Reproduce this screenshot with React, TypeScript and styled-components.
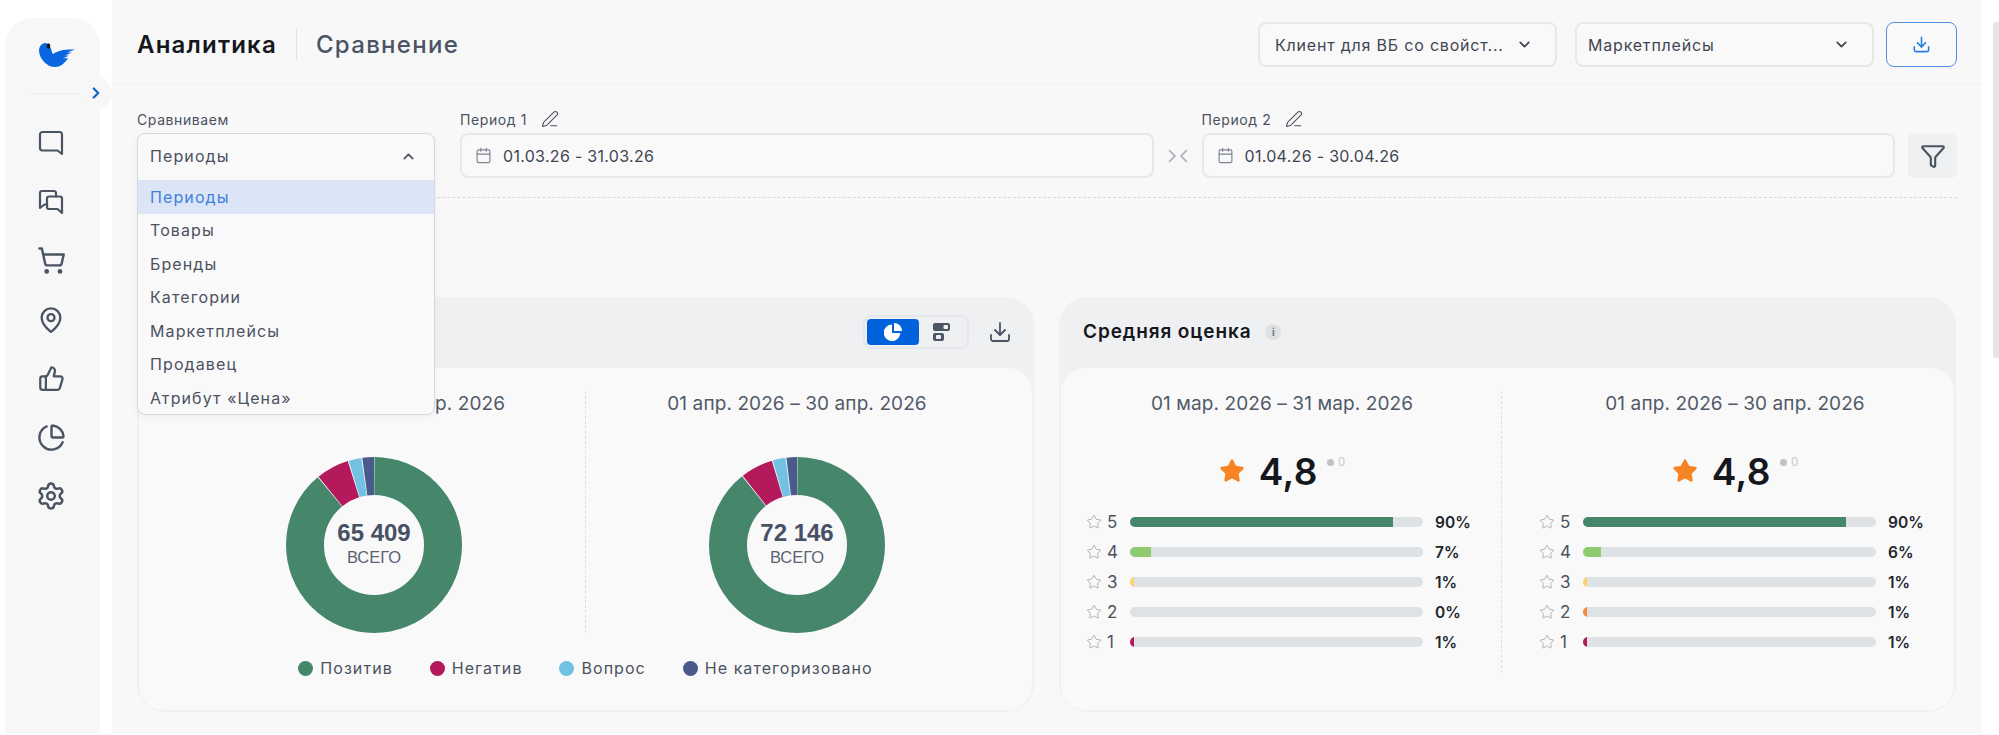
import React from "react";
import styled, { createGlobalStyle } from "styled-components";
import {
  Calendar,
  ChartPie,
  ChevronDown,
  ChevronRight,
  ChevronUp,
  Download,
  Funnel,
  MapPin,
  PenLine,
  Settings,
  ShoppingCart,
  Star,
  ThumbsUp,
} from "lucide-react";

const GlobalStyle = createGlobalStyle`
  html, body {
    margin: 0;
    padding: 0;
    background: #ffffff;
    font-family: Inter, "Noto Sans", sans-serif;
    color: #4b5260;
  }
  * { box-sizing: border-box; }
`;

interface ISegment {
  value: number;
  color: string;
}

const GREEN = "#46866b";
const MAGENTA = "#b3195b";
const SKY = "#72c1e3";
const NAVY = "#4a5a8a";

const options = ["Периоды", "Товары", "Бренды", "Категории", "Маркетплейсы", "Продавец", "Атрибут «Цена»"];

const legend = [
  { label: "Позитив", color: GREEN },
  { label: "Негатив", color: MAGENTA },
  { label: "Вопрос", color: SKY },
  { label: "Не категоризовано", color: NAVY },
];

const ratingsFirst = [
  { star: 5, pct: 90, fill: 89.6, color: GREEN },
  { star: 4, pct: 7, fill: 7, color: "#8ecb70" },
  { star: 3, pct: 1, fill: 1.2, color: "#fbd36b" },
  { star: 2, pct: 0, fill: 0, color: "#f78a3a" },
  { star: 1, pct: 1, fill: 1.2, color: MAGENTA },
];

const ratingsSecond = [
  { star: 5, pct: 90, fill: 89.6, color: GREEN },
  { star: 4, pct: 6, fill: 6, color: "#8ecb70" },
  { star: 3, pct: 1, fill: 1.2, color: "#fbd36b" },
  { star: 2, pct: 1, fill: 1.2, color: "#f78a3a" },
  { star: 1, pct: 1, fill: 1.2, color: MAGENTA },
];

const BirdLogo = () => (
  <svg width="36" height="24" viewBox="0 0 36 24">
    <path
      fill="#0a66e0"
      d="M6 0C2 .5 0 4 0 8c.5 8 8 16 16 16 6 0 11-5 13-9l-5 .5 6-3h-4l7-3h-5l8-3c-8-.5-17 .5-22 4.500-2-2-1-5-3-7C10 2 8 0 6 0Z"
    />
    <ellipse cx="9.500" cy="3" rx="1.800" ry="2.800" fill="#15171c" />
  </svg>
);

const BubbleIcon = () => (
  <svg width="26" height="26" viewBox="0 0 26 26" fill="none" stroke="currentColor" strokeWidth="2.2" strokeLinejoin="round">
    <path d="M4.500 2h17A2.500 2.500 0 0 1 24 4.500V24l-4.500-3.500h-15A2.500 2.500 0 0 1 2 18V4.500A2.500 2.500 0 0 1 4.500 2Z" />
  </svg>
);

const BubblesIcon = () => (
  <svg width="26" height="26" viewBox="0 0 26 26" fill="none" stroke="currentColor" strokeWidth="2.2" strokeLinejoin="round" strokeLinecap="round">
    <path d="M18 7.500V4a2 2 0 0 0-2-2H4a2 2 0 0 0-2 2v15l4.500-3.500H9" />
    <path d="M11 7.500h11a2 2 0 0 1 2 2V24l-4.500-4H11a2 2 0 0 1-2-2V9.500a2 2 0 0 1 2-2Z" />
  </svg>
);

const SwapIcon = () => (
  <svg width="20" height="14" viewBox="0 0 20 14" fill="none" stroke="#a7abb1" strokeWidth="1.600" strokeLinecap="round" strokeLinejoin="round">
    <path d="M1.500 1.500 7 7l-5.500 5.500" />
    <path d="M18.500 1.500 13 7l5.500 5.500" />
  </svg>
);

const PieFillIcon = () => (
  <svg width="18" height="18" viewBox="0 0 18 18" fill="#ffffff">
    <path d="M8 1.500v8.500h8.300A8.300 8.300 0 1 1 8 1.500Z" />
    <path d="M10 0a8 8 0 0 1 8 8h-8V0Z" />
  </svg>
);

const BarsIcon = () => (
  <svg width="17" height="18" viewBox="0 0 17 18">
    <rect x="0" y="0" width="17" height="8" rx="2" fill="#4b5563" />
    <rect x="10.500" y="2" width="4.500" height="4" rx="1" fill="#eff0f2" />
    <rect x="0" y="10" width="11" height="8" rx="2" fill="#4b5563" />
    <rect x="3" y="12" width="5" height="4" rx="1" fill="#eff0f2" />
  </svg>
);

const Donut: React.FC<{ segments: ISegment[]; total: string }> = ({ segments, total }) => {
  const radius = 69;
  const length = 2 * Math.PI * radius;
  let passed = 0;

  return (
    <DonutBox>
      <svg width="176" height="176" viewBox="0 0 176 176">
        <g transform="rotate(-90 88 88)" fill="none" strokeWidth="38">
          {segments.map((s) => {
            const size = (s.value / 100) * length;
            const circle = (
              <circle
                key={s.color}
                cx="88"
                cy="88"
                r={radius}
                stroke={s.color}
                strokeDasharray={`${size - 0.8} ${length - size + 0.8}`}
                strokeDashoffset={-passed - 0.4}
              />
            );
            passed += size;
            return circle;
          })}
        </g>
      </svg>
      <DonutCenter>
        <DonutTotal>{total}</DonutTotal>
        <DonutCaption>ВСЕГО</DonutCaption>
      </DonutCenter>
    </DonutBox>
  );
};

const RatingRows: React.FC<{ rows: typeof ratingsFirst }> = ({ rows }) => (
  <Rows>
    {rows.map((row) => (
      <Row key={row.star}>
        <RowLabel>
          <Star size={16} strokeWidth={1.4} color="#a9acb0" />
          <span>{row.star}</span>
        </RowLabel>
        <Track>
          <TrackFill $color={row.color} style={{ width: `${row.fill}%` }} />
        </Track>
        <RowValue>{row.pct}%</RowValue>
      </Row>
    ))}
  </Rows>
);

const RatingHead = () => (
  <RatingLine>
    <Star size={26} fill="#f78424" color="#f78424" strokeWidth={1.5} />
    <RatingNumber>4,8</RatingNumber>
    <RatingDelta>
      <DeltaDot />
      <span>0</span>
    </RatingDelta>
  </RatingLine>
);

const App = () => {
  return (
    <Page>
      <GlobalStyle />
      <Sidebar>
        <LogoWrap>
          <BirdLogo />
        </LogoWrap>
        <SideDivider>
          <CollapseBump>
            <ChevronRight size={18} strokeWidth={3} color="#1664c8" />
          </CollapseBump>
        </SideDivider>
        <SideNav>
          <NavItem><BubbleIcon /></NavItem>
          <NavItem><BubblesIcon /></NavItem>
          <NavItem><ShoppingCart size={29} strokeWidth={2} /></NavItem>
          <NavItem><MapPin size={28} strokeWidth={2} /></NavItem>
          <NavItem><ThumbsUp size={27} strokeWidth={2} /></NavItem>
          <NavItem><ChartPie size={29} strokeWidth={2} /></NavItem>
          <NavItem><Settings size={30} strokeWidth={2} /></NavItem>
        </SideNav>
      </Sidebar>

      <Main>
        <Header>
          <Titles>
            <PageTitle>Аналитика</PageTitle>
            <TitleDivider />
            <PageSubtitle>Сравнение</PageSubtitle>
          </Titles>
          <HeaderControls>
            <HeaderSelect $pad={15}>
              <span>Клиент для ВБ со свойст...</span>
              <ChevronDown size={17} strokeWidth={2.4} />
            </HeaderSelect>
            <HeaderSelect $pad={11}>
              <span>Маркетплейсы</span>
              <ChevronDown size={17} strokeWidth={2.4} />
            </HeaderSelect>
            <ExportButton>
              <Download size={19} strokeWidth={2} />
            </ExportButton>
          </HeaderControls>
        </Header>

        <Content>
          <Filters>
            <CompareField>
              <FieldLabel>Сравниваем</FieldLabel>
              <CompareAnchor>
                <CompareMenu>
                  <CompareHead>
                    <span>Периоды</span>
                    <ChevronUp size={17} strokeWidth={2.4} />
                  </CompareHead>
                  {options.map((option, i) => (
                    <CompareOption key={option} $active={i === 0}>
                      {option}
                    </CompareOption>
                  ))}
                </CompareMenu>
              </CompareAnchor>
            </CompareField>
            <PeriodField>
              <FieldLabel>
                Период 1
                <PenLine size={18} strokeWidth={1.5} />
              </FieldLabel>
              <DateInput>
                <Calendar size={17} strokeWidth={1.6} color="#7c8490" />
                01.03.26 - 31.03.26
              </DateInput>
            </PeriodField>
            <SwapBox>
              <SwapIcon />
            </SwapBox>
            <PeriodField>
              <FieldLabel>
                Период 2
                <PenLine size={18} strokeWidth={1.5} />
              </FieldLabel>
              <DateInput>
                <Calendar size={17} strokeWidth={1.6} color="#7c8490" />
                01.04.26 - 30.04.26
              </DateInput>
            </PeriodField>
            <FilterButton>
              <Funnel size={26} strokeWidth={2} />
            </FilterButton>
          </Filters>
          <DashedLine />

          <Cards>
            <Card>
              <CardHead>
                <CardTools>
                  <ViewToggle>
                    <ViewButton $active>
                      <PieFillIcon />
                    </ViewButton>
                    <ViewButton>
                      <BarsIcon />
                    </ViewButton>
                  </ViewToggle>
                  <Download size={24} strokeWidth={1.8} />
                </CardTools>
              </CardHead>
              <CardBody>
                <Columns>
                  <DonutColumn $side="left">
                    <PeriodCaption>01 мар. 2026 – 31 мар. 2026</PeriodCaption>
                    <Donut
                      total="65 409"
                      segments={[
                        { value: 88.9, color: GREEN },
                        { value: 6.2, color: MAGENTA },
                        { value: 2.5, color: SKY },
                        { value: 2.4, color: NAVY },
                      ]}
                    />
                  </DonutColumn>
                  <DonutColumn $side="right">
                    <PeriodCaption>01 апр. 2026 – 30 апр. 2026</PeriodCaption>
                    <Donut
                      total="72 146"
                      segments={[
                        { value: 89.2, color: GREEN },
                        { value: 6.1, color: MAGENTA },
                        { value: 2.5, color: SKY },
                        { value: 2.2, color: NAVY },
                      ]}
                    />
                  </DonutColumn>
                </Columns>
                <Legend>
                  {legend.map((item) => (
                    <LegendItem key={item.label}>
                      <LegendDot $color={item.color} />
                      {item.label}
                    </LegendItem>
                  ))}
                </Legend>
              </CardBody>
            </Card>

            <Card>
              <CardHead>
                <CardTitle>Средняя оценка</CardTitle>
                <InfoBadge>i</InfoBadge>
              </CardHead>
              <CardBody>
                <RatingColumns>
                  <RatingColumn $divided>
                    <PeriodCaption>01 мар. 2026 – 31 мар. 2026</PeriodCaption>
                    <RatingHead />
                    <RatingRows rows={ratingsFirst} />
                  </RatingColumn>
                  <RatingColumn $shift>
                    <PeriodCaption>01 апр. 2026 – 30 апр. 2026</PeriodCaption>
                    <RatingHead />
                    <RatingRows rows={ratingsSecond} />
                  </RatingColumn>
                </RatingColumns>
              </CardBody>
            </Card>
          </Cards>
        </Content>
      </Main>

      <ScrollTrack>
        <ScrollThumb />
      </ScrollTrack>
    </Page>
  );
};

export default App;

const Page = styled.div`
  display: flex;
  width: 1999px;
  height: 735px;
  padding-left: 5px;
  overflow: hidden;
  background: #ffffff;
`;

const Sidebar = styled.aside`
  flex: none;
  width: 95px;
  height: 715px;
  margin-top: 18px;
  margin-right: 12px;
  background: #f7f7f8;
  border-radius: 28px 28px 0 0;
  color: #4a5463;
`;

const LogoWrap = styled.div`
  display: flex;
  justify-content: center;
  padding: 25px 0 0 8px;
`;

const SideDivider = styled.div`
  position: relative;
  height: 1px;
  margin: 26px 0 0 23px;
  width: 58px;
  background: #eceef0;
`;

const CollapseBump = styled.div`
  position: absolute;
  left: 52px;
  top: -16px;
  width: 32px;
  height: 32px;
  display: flex;
  align-items: center;
  justify-content: center;
  border-radius: 50%;
  background: #f7f7f8;
`;

const SideNav = styled.nav`
  display: flex;
  flex-direction: column;
  margin-top: 20px;
`;

const NavItem = styled.div`
  display: flex;
  align-items: center;
  justify-content: center;
  height: 58.8px;
  padding-right: 3px;
`;

const Main = styled.main`
  flex: none;
  width: 1870px;
  height: 733px;
  background: #f8f8f9;
`;

const Header = styled.header`
  display: flex;
  align-items: center;
  justify-content: space-between;
  height: 85px;
  padding: 5px 25px 0;
  border-bottom: 1px solid #eef0f1;
`;

const Titles = styled.div`
  display: flex;
  align-items: center;
`;

const PageTitle = styled.h1`
  margin: 0;
  font-size: 24px;
  font-weight: 600;
  letter-spacing: 1.2px;
  color: #15171c;
`;

const TitleDivider = styled.span`
  width: 1px;
  height: 31px;
  margin: 0 19px;
  background: #dfe1e4;
`;

const PageSubtitle = styled.h2`
  margin: 0;
  font-size: 24px;
  font-weight: 500;
  letter-spacing: 1.3px;
  color: #4a5464;
`;

const HeaderControls = styled.div`
  display: flex;
  align-items: center;
`;

const HeaderSelect = styled.div<{ $pad: number }>`
  display: flex;
  align-items: center;
  justify-content: space-between;
  width: 299px;
  height: 45px;
  margin-right: 18px;
  padding: 0 22px 0 ${(p) => p.$pad}px;
  font-size: 16px;
  color: #3f4650;
  letter-spacing: 0.8px;
  background: #f9f9fa;
  border: 2px solid #e6e8ea;
  border-radius: 8px;

  &:nth-child(2) {
    margin-right: 12px;
  }
`;

const ExportButton = styled.button`
  display: flex;
  align-items: center;
  justify-content: center;
  width: 71px;
  height: 45px;
  padding: 0;
  color: #2b7de0;
  background: #f9f9fa;
  border: 1.5px solid #4f90e2;
  border-radius: 8px;
`;

const Content = styled.div`
  padding: 25px 25px 0;
`;

const Filters = styled.div`
  display: flex;
  align-items: flex-end;
`;

const CompareField = styled.div`
  flex: none;
  width: 298px;
  margin-right: 25px;
`;

const FieldLabel = styled.div`
  display: flex;
  align-items: center;
  gap: 14px;
  height: 18px;
  margin-bottom: 5px;
  font-size: 14px;
  letter-spacing: 0.6px;
  color: #4b5260;
`;

const CompareAnchor = styled.div`
  position: relative;
  height: 45px;
`;

const CompareMenu = styled.div`
  position: absolute;
  top: 0;
  left: 0;
  right: 0;
  z-index: 5;
  height: 282px;
  overflow: hidden;
  background: #f9f9fa;
  border: 1.5px solid #d5d8db;
  border-radius: 8px;
  box-shadow: 0 2px 6px rgba(60, 70, 80, 0.06);
`;

const CompareHead = styled.div`
  display: flex;
  align-items: center;
  justify-content: space-between;
  height: 44px;
  margin-bottom: 2px;
  padding: 0 17px 0 12px;
  font-size: 16px;
  letter-spacing: 1.1px;
  color: #4b5260;
`;

const CompareOption = styled.div<{ $active?: boolean }>`
  display: flex;
  align-items: center;
  height: 33.5px;
  padding-left: 12px;
  font-size: 16px;
  letter-spacing: 1.1px;
  color: ${(p) => (p.$active ? "#3f7fe0" : "#4b5260")};
  background: ${(p) => (p.$active ? "#dbe5f5" : "transparent")};
`;

const PeriodField = styled.div`
  flex: 1;
`;

const DateInput = styled.div`
  display: flex;
  align-items: center;
  gap: 11px;
  height: 45px;
  padding-left: 13px;
  font-size: 16px;
  letter-spacing: 0.3px;
  color: #3f4650;
  background: #f9f9fa;
  border: 2px solid #e6e8ea;
  border-radius: 8px;
`;

const SwapBox = styled.div`
  display: flex;
  align-items: center;
  justify-content: center;
  flex: none;
  width: 48px;
  height: 45px;
`;

const FilterButton = styled.button`
  display: flex;
  align-items: center;
  justify-content: center;
  flex: none;
  width: 49px;
  height: 45px;
  margin-left: 13px;
  padding: 0;
  color: #4a5463;
  background: #eff0f2;
  border: 0;
  border-radius: 6px;
`;

const DashedLine = styled.div`
  margin-top: 19px;
  border-top: 1px dashed #d6d9dc;
`;

const Cards = styled.div`
  display: grid;
  grid-template-columns: 897px 897px;
  gap: 25px;
  margin-top: 99px;
`;

const Card = styled.section`
  display: flex;
  flex-direction: column;
  height: 415px;
  padding: 0 2px 2px;
  background: #eff0f2;
  border-radius: 28px;
`;

const CardHead = styled.div`
  display: flex;
  align-items: center;
  flex: none;
  height: 71px;
  padding: 0 22px 2px;
  color: #4a5463;
`;

const CardTitle = styled.h3`
  margin: 0;
  font-size: 19px;
  font-weight: 600;
  letter-spacing: 0.9px;
  color: #15171c;
`;

const InfoBadge = styled.span`
  display: flex;
  align-items: center;
  justify-content: center;
  width: 16px;
  height: 16px;
  margin-left: 14px;
  font-size: 10px;
  font-weight: 700;
  color: #6c727b;
  background: #dfe1e3;
  border-radius: 50%;
`;

const CardTools = styled.div`
  display: flex;
  align-items: center;
  gap: 19px;
  margin: 0 -2px 0 auto;
`;

const ViewToggle = styled.div`
  display: flex;
  width: 106px;
  height: 34px;
  padding: 2px;
  background: #eff0f2;
  border: 2px solid #e5e7ea;
  border-radius: 8px;
`;

const ViewButton = styled.div<{ $active?: boolean }>`
  display: flex;
  align-items: center;
  justify-content: center;
  width: ${(p) => (p.$active ? "52px" : "44px")};
  background: ${(p) => (p.$active ? "#0063dc" : "transparent")};
  border-radius: 4px;
`;

const CardBody = styled.div`
  flex: 1;
  padding-top: 23px;
  background: #f9f9fa;
  border-radius: 24px;
`;

const Columns = styled.div`
  display: flex;
  height: 242px;
`;

const DonutColumn = styled.div<{ $side: "left" | "right" }>`
  display: flex;
  flex-direction: column;
  align-items: center;
  width: ${(p) => (p.$side === "left" ? "447px" : "446px")};
  padding: ${(p) => (p.$side === "left" ? "0 0 0 24px" : "0 24px 0 0")};
  border-right: ${(p) => (p.$side === "left" ? "1px dashed #dcdee1" : "0")};
`;

const PeriodCaption = styled.div`
  flex: none;
  height: 22px;
  padding-top: 2px;
  line-height: 22px;
  font-size: 19px;
  letter-spacing: 0.1px;
  white-space: nowrap;
  color: #515967;
`;

const DonutBox = styled.div`
  position: relative;
  width: 176px;
  height: 176px;
  margin-top: 44px;

  svg {
    display: block;
  }
`;

const DonutCenter = styled.div`
  position: absolute;
  inset: 0;
  display: flex;
  flex-direction: column;
  align-items: center;
  padding-top: 62px;
  font-family: "Liberation Sans", Arial, sans-serif;
`;

const DonutTotal = styled.div`
  font-size: 24px;
  line-height: 28px;
  font-weight: 700;
  color: #475064;
`;

const DonutCaption = styled.div`
  margin-top: 1px;
  font-size: 16.500px;
  line-height: 19px;
  color: #5b6373;
`;

const Legend = styled.div`
  display: flex;
  justify-content: center;
  gap: 37px;
  margin-top: 25px;
`;

const LegendItem = styled.div`
  display: flex;
  align-items: center;
  gap: 7px;
  height: 20px;
  font-size: 16px;
  letter-spacing: 1.05px;
  color: #4b5260;
`;

const LegendDot = styled.span<{ $color: string }>`
  width: 15px;
  height: 15px;
  border-radius: 50%;
  background: ${(p) => p.$color};
`;

const RatingColumns = styled.div`
  display: flex;
  height: 282px;
`;

const RatingColumn = styled.div<{ $divided?: boolean; $shift?: boolean }>`
  display: flex;
  flex-direction: column;
  align-items: center;
  width: ${(p) => (p.$divided ? "441px" : "452px")};
  padding-left: ${(p) => (p.$shift ? "14px" : "2px")};
  border-right: ${(p) => (p.$divided ? "1px dashed #dcdee1" : "0")};
`;

const RatingLine = styled.div`
  display: flex;
  align-items: center;
  height: 50px;
  margin-top: 33px;
`;

const RatingNumber = styled.span`
  margin-left: 14px;
  font-size: 37px;
  font-weight: 600;
  letter-spacing: 0.5px;
  color: #15171c;
`;

const RatingDelta = styled.span`
  display: flex;
  align-items: center;
  gap: 4px;
  margin: -18px 0 0 9px;
  font-size: 11.500px;
  color: #c8cacc;
`;

const DeltaDot = styled.i`
  width: 7px;
  height: 7px;
  border-radius: 50%;
  background: #c0c2c5;
`;

const Rows = styled.div`
  display: flex;
  flex-direction: column;
  margin-top: 11px;
`;

const Row = styled.div`
  display: flex;
  align-items: center;
  width: 392px;
  height: 30px;
`;

const RowLabel = styled.div`
  display: flex;
  align-items: center;
  gap: 5px;
  flex: none;
  width: 44px;
  font-size: 17px;
  color: #4b5260;
`;

const Track = styled.div`
  flex: none;
  width: 293px;
  height: 10px;
  overflow: hidden;
  background: #dfe2e4;
  border-radius: 5px;
`;

const TrackFill = styled.div<{ $color: string }>`
  height: 100%;
  background: ${(p) => p.$color};
`;

const RowValue = styled.div`
  margin-left: 12px;
  font-size: 15.500px;
  font-weight: 600;
  color: #22252b;
`;

const ScrollTrack = styled.div`
  flex: none;
  width: 6px;
  margin-left: 11px;
  padding-top: 22px;
`;

const ScrollThumb = styled.div`
  height: 336px;
  background: #e4e5e7;
  border-radius: 3px 0 0 3px;
`;
